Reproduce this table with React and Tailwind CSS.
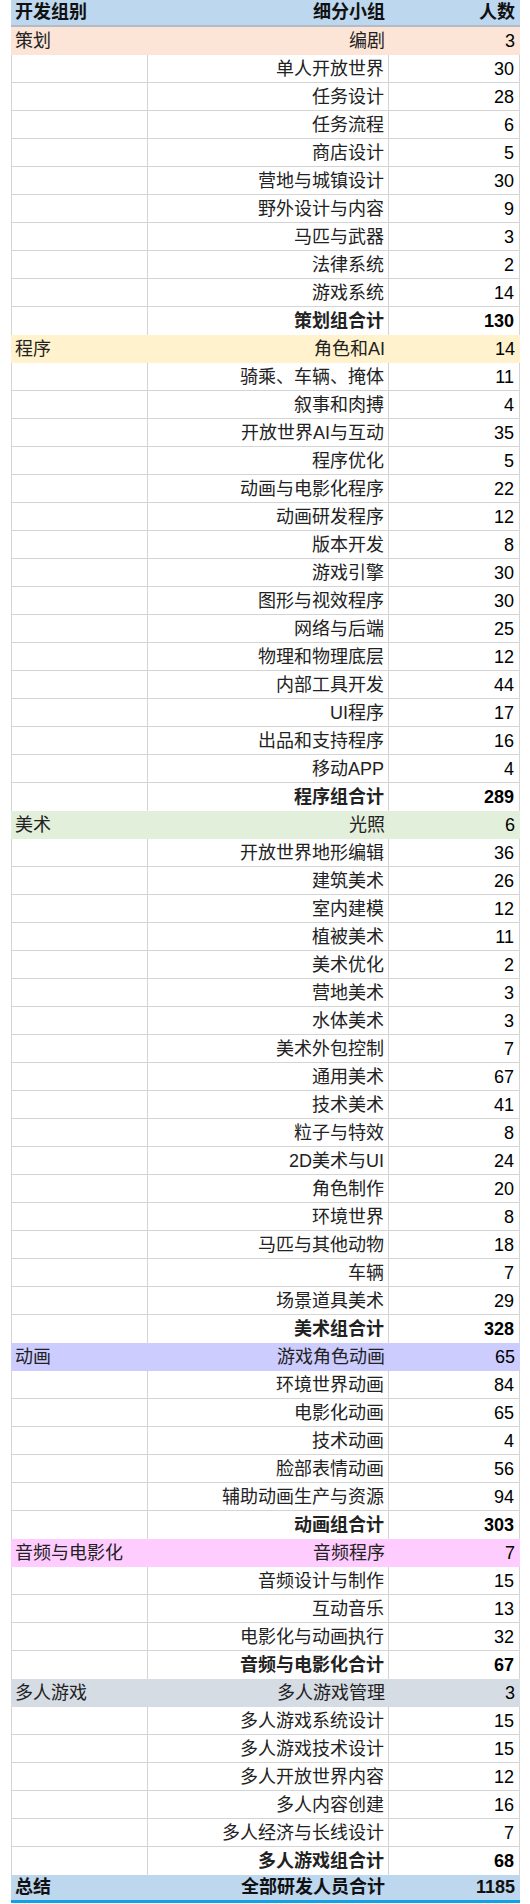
import React from 'react';

const groups = [
  {
    name: '策划',
    bg: 'bg-[#fce4d6]',
    rows: [
      ['编剧', 3],
      ['单人开放世界', 30],
      ['任务设计', 28],
      ['任务流程', 6],
      ['商店设计', 5],
      ['营地与城镇设计', 30],
      ['野外设计与内容', 9],
      ['马匹与武器', 3],
      ['法律系统', 2],
      ['游戏系统', 14],
    ],
    total: ['策划组合计', 130],
  },
  {
    name: '程序',
    bg: 'bg-[#fff2cc]',
    rows: [
      ['角色和AI', 14],
      ['骑乘、车辆、掩体', 11],
      ['叙事和肉搏', 4],
      ['开放世界AI与互动', 35],
      ['程序优化', 5],
      ['动画与电影化程序', 22],
      ['动画研发程序', 12],
      ['版本开发', 8],
      ['游戏引擎', 30],
      ['图形与视效程序', 30],
      ['网络与后端', 25],
      ['物理和物理底层', 12],
      ['内部工具开发', 44],
      ['UI程序', 17],
      ['出品和支持程序', 16],
      ['移动APP', 4],
    ],
    total: ['程序组合计', 289],
  },
  {
    name: '美术',
    bg: 'bg-[#e2efda]',
    rows: [
      ['光照', 6],
      ['开放世界地形编辑', 36],
      ['建筑美术', 26],
      ['室内建模', 12],
      ['植被美术', 11],
      ['美术优化', 2],
      ['营地美术', 3],
      ['水体美术', 3],
      ['美术外包控制', 7],
      ['通用美术', 67],
      ['技术美术', 41],
      ['粒子与特效', 8],
      ['2D美术与UI', 24],
      ['角色制作', 20],
      ['环境世界', 8],
      ['马匹与其他动物', 18],
      ['车辆', 7],
      ['场景道具美术', 29],
    ],
    total: ['美术组合计', 328],
  },
  {
    name: '动画',
    bg: 'bg-[#ccccff]',
    rows: [
      ['游戏角色动画', 65],
      ['环境世界动画', 84],
      ['电影化动画', 65],
      ['技术动画', 4],
      ['脸部表情动画', 56],
      ['辅助动画生产与资源', 94],
    ],
    total: ['动画组合计', 303],
  },
  {
    name: '音频与电影化',
    bg: 'bg-[#ffccff]',
    rows: [
      ['音频程序', 7],
      ['音频设计与制作', 15],
      ['互动音乐', 13],
      ['电影化与动画执行', 32],
    ],
    total: ['音频与电影化合计', 67],
  },
  {
    name: '多人游戏',
    bg: 'bg-[#d6dce4]',
    rows: [
      ['多人游戏管理', 3],
      ['多人游戏系统设计', 15],
      ['多人游戏技术设计', 15],
      ['多人开放世界内容', 12],
      ['多人内容创建', 16],
      ['多人经济与长线设计', 7],
    ],
    total: ['多人游戏组合计', 68],
  },
];

const font = { fontFamily: '"Liberation Sans", "Noto Sans CJK SC", sans-serif' };

// colored first row of a group: fill hides the gridlines
function GroupRow({ name, bg, label, count }) {
  return (
    <div className={`flex h-[28px] items-center ${bg} text-[18px] text-[#222]`}>
      <div className="w-[137px] pl-[4px] pt-[1px]">{name}</div>
      <div className="w-[241px] pr-[4px] pt-[1px] text-right">{label}</div>
      <div className="w-[131px] pr-[5px] pt-[1px] text-right text-black">{count}</div>
    </div>
  );
}

// plain white row with gridlines; nextColored drops the bottom line
function Row({ label, count, bold, nextColored }) {
  return (
    <div
      className={`flex h-[28px] text-[18px] text-[#222] ${
        nextColored ? '' : 'border-b border-[#d4d4d4]'
      } ${bold ? 'font-bold' : ''}`}
    >
      <div className="w-[137px] border-x border-[#d4d4d4]" />
      <div className="flex w-[241px] items-center justify-end border-r border-[#d4d4d4] pr-[4px] pt-[1px]">
        {label}
      </div>
      <div className="flex w-[131px] items-center justify-end border-r border-[#d4d4d4] pr-[5px] pt-[1px] text-black">
        {count}
      </div>
    </div>
  );
}

export default function App() {
  return (
    <div className="min-h-[1904px] w-[530px] bg-white" style={font}>
      <div className="ml-[11px] w-[509px]">
        {/* header */}
        <div className="flex h-[27px] items-center border-b-2 border-[#b3bcc6] bg-[#bdd7ee] text-[18px] font-bold text-[#111]">
          <div className="w-[137px] pl-[4px]">开发组别</div>
          <div className="w-[241px] pr-[4px] text-right">细分小组</div>
          <div className="w-[131px] pr-[5px] text-right">人数</div>
        </div>

        {groups.map(g => (
          <div key={g.name}>
            <GroupRow name={g.name} bg={g.bg} label={g.rows[0][0]} count={g.rows[0][1]} />
            {g.rows.slice(1).map(([label, count]) => (
              <Row key={label} label={label} count={count} />
            ))}
            <Row label={g.total[0]} count={g.total[1]} bold nextColored />
          </div>
        ))}

        {/* grand total */}
        <div className="flex h-[28px] items-center border-b-[3px] border-[#12a0e6] bg-[#bdd7ee] text-[18px] font-bold text-[#111]">
          <div className="w-[137px] pl-[4px]">总结</div>
          <div className="w-[241px] pr-[4px] text-right">全部研发人员合计</div>
          <div className="w-[131px] pr-[5px] text-right">1185</div>
        </div>
      </div>
    </div>
  );
}
